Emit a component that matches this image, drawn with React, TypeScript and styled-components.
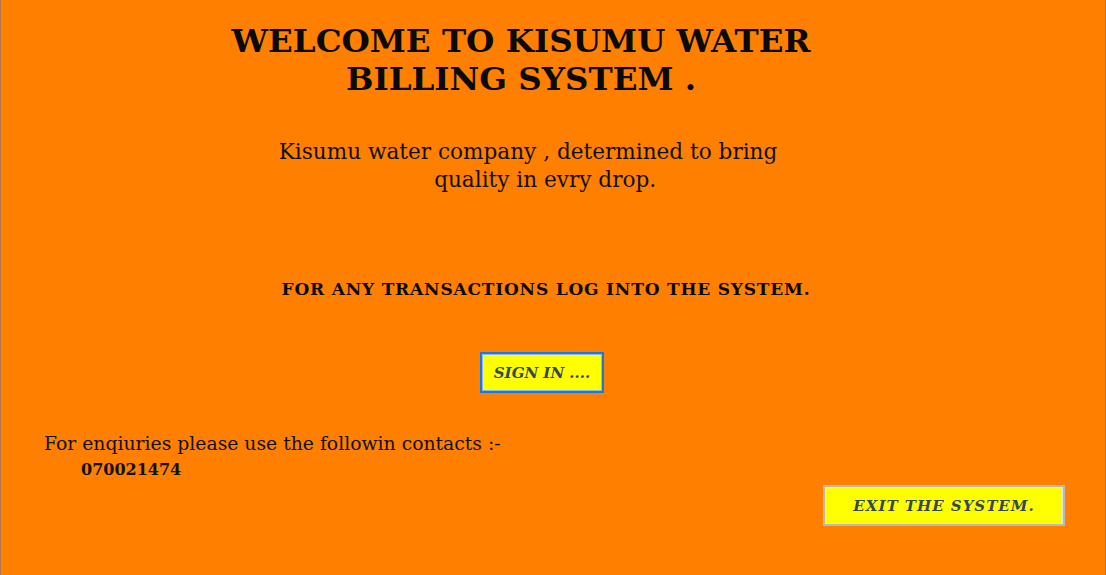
import React from "react";
import styled, { createGlobalStyle } from "styled-components";

const Global = createGlobalStyle`
  html, body { margin: 0; padding: 0; }
  body { background: #ff8000; }
`;

const Frame = styled.div`
  box-sizing: border-box;
  width: 1106px;
  height: 575px;
  background: #ff8000;
  border-left: 1px solid #b07a48;
  border-right: 1px solid #b07a48;
  display: flex;
  flex-direction: column;
  font-family: "DejaVu Serif", "Liberation Serif", serif;
  color: #111;
  overflow: hidden;
`;

const Centered = styled.div<{ $shift: number; $top: number }>`
  text-align: center;
  margin-top: ${(p) => p.$top}px;
  padding-left: ${(p) => (p.$shift > 0 ? p.$shift * 2 : 0)}px;
  padding-right: ${(p) => (p.$shift < 0 ? -p.$shift * 2 : 0)}px;
`;

const Title = styled.h1`
  margin: 0;
  font-family: "DejaVu Serif", serif;
  font-weight: bold;
  font-size: 32.5px;
  line-height: 38px;
  color: #0a0a0a;
`;

const Subtitle = styled.p`
  margin: 0;
  font-family: "DejaVu Serif", serif;
  font-size: 21.6px;
  line-height: 28px;
  color: #111;
`;

const Notice = styled.p`
  margin: 0;
  font-family: "DejaVu Serif", serif;
  font-weight: bold;
  font-size: 17px;
  line-height: 18px;
  letter-spacing: 0.8px;
  color: #0a0a0a;
`;

const ActionButton = styled.button<{ $variant: "blue" | "grey"; $width: number; $spacing: number }>`
  box-sizing: border-box;
  width: ${(p) => p.$width}px;
  height: 41px;
  background: #ffff00;
  border: 2px solid ${(p) => (p.$variant === "blue" ? "#1c78dc" : "#b9b9b9")};
  box-shadow: inset 0 0 0 1px ${(p) => (p.$variant === "blue" ? "#8bbcf0" : "#e4e4e4")};
  font-family: "DejaVu Serif", serif;
  font-style: italic;
  font-weight: bold;
  font-size: 15px;
  letter-spacing: ${(p) => p.$spacing}px;
  color: #34485c;
  padding: 0;
  cursor: pointer;
`;

const Footer = styled.div`
  margin-top: 38px;
  padding-left: 43px;
  display: flex;
  flex-direction: column;
`;

const Contact = styled.p`
  margin: 0;
  font-family: "DejaVu Serif", serif;
  font-size: 18.8px;
  line-height: 26px;
  color: #111;
`;

const Phone = styled.p`
  margin: 3px 0 0;
  padding-left: 37px;
  font-family: "DejaVu Serif", serif;
  font-weight: bold;
  font-size: 16px;
  line-height: 20px;
  color: #111;
`;

const ExitRow = styled.div`
  display: flex;
  justify-content: flex-end;
  padding-right: 40px;
  margin-top: 5px;
`;

export default function App() {
  return (
    <>
      <Global />
      <Frame>
        <Centered $shift={-32} $top={22}>
          <Title>
            WELCOME TO KISUMU WATER
            <br />
            BILLING SYSTEM .
          </Title>
        </Centered>
        <Centered $shift={-25} $top={40}>
          <Subtitle>
            Kisumu water company , determined to bring
            <br />
            &nbsp;&nbsp;&nbsp;&nbsp;&nbsp;quality in evry drop.
          </Subtitle>
        </Centered>
        <Centered $shift={-7} $top={86}>
          <Notice>FOR ANY TRANSACTIONS LOG INTO THE SYSTEM.</Notice>
        </Centered>
        <Centered $shift={-11} $top={54}>
          <ActionButton $variant="blue" $width={124} $spacing={0}>
            SIGN IN ....
          </ActionButton>
        </Centered>
        <Footer>
          <Contact>For enqiuries please use the followin contacts :-</Contact>
          <Phone>070021474</Phone>
        </Footer>
        <ExitRow>
          <ActionButton $variant="grey" $width={242} $spacing={1}>
            EXIT THE SYSTEM.
          </ActionButton>
        </ExitRow>
      </Frame>
    </>
  );
}
